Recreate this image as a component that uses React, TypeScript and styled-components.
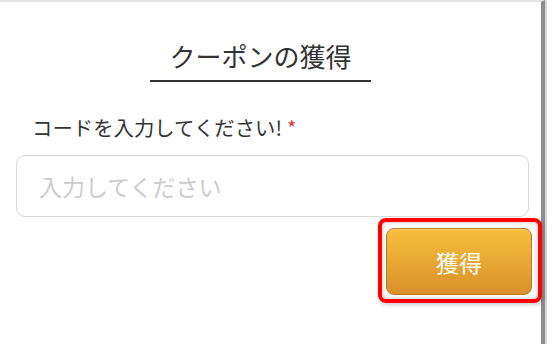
import React from "react";
import styled, { createGlobalStyle } from "styled-components";

const GlobalStyle = createGlobalStyle`
  html, body {
    margin: 0;
    padding: 0;
    background: #fff;
  }
  body {
    font-family: "Noto Sans CJK JP", "Noto Sans", sans-serif;
    color: #333;
  }
`;

const Page = styled.div`
  width: 545px;
  height: 344px;
  box-sizing: border-box;
  border-top: 2px solid #e4e4e4;
  border-right: 4px solid #8c8c8c;
  box-shadow: 2px 0 0 #d6d6d6;
  padding: 0 16px;
  display: flex;
  flex-direction: column;
`;

const TitleRow = styled.div`
  display: flex;
  justify-content: center;
  padding-right: 20px;
  margin-top: 36px;
`;

const Title = styled.h2`
  margin: 0;
  padding: 0 19px 6px;
  font-size: 26px;
  font-weight: 400;
  line-height: 36px;
  color: #333;
  border-bottom: 2px solid #333;
`;

const Label = styled.label`
  display: block;
  margin: 31px 0 0 16px;
  font-size: 20.4px;
  line-height: 28px;
  color: #333;
`;

const Required = styled.span`
  color: #e53935;
  margin-left: 5px;
`;

const Input = styled.input`
  display: block;
  box-sizing: border-box;
  width: 513px;
  height: 62px;
  margin-top: 14px;
  padding: 0 22px;
  border: 1px solid #d9d9d9;
  border-radius: 9px;
  font-family: inherit;
  font-size: 23px;
  color: #333;
  outline: none;

  &::placeholder {
    color: #cccccc;
  }
`;

const Actions = styled.div`
  display: flex;
  justify-content: flex-end;
  margin-top: 1px;
  margin-right: -17px;
`;

const Highlight = styled.div`
  border: 4px solid #ff0000;
  border-radius: 8px;
  padding: 6px 6px 4px 4px;
  box-shadow: inset 0 0 5px rgba(0, 0, 0, 0.25), 1px 2px 4px rgba(0, 0, 0, 0.2);
  display: flex;
`;

const GetButton = styled.button`
  width: 146px;
  height: 67px;
  border: 1px solid #b87a2c;
  border-radius: 8px;
  background: linear-gradient(to bottom, #f7bf3a, #da902c);
  color: #fff;
  font-family: inherit;
  font-size: 23px;
  cursor: pointer;
  box-shadow: inset 0 1px 0 rgba(255, 255, 255, 0.25);
`;

export default function App() {
  return (
    <>
      <GlobalStyle />
      <Page>
        <TitleRow>
          <Title>クーポンの獲得</Title>
        </TitleRow>
        <Label htmlFor="coupon">
          コードを入力してください!<Required>*</Required>
        </Label>
        <Input id="coupon" placeholder="入力してください" />
        <Actions>
          <Highlight>
            <GetButton type="button">獲得</GetButton>
          </Highlight>
        </Actions>
      </Page>
    </>
  );
}
